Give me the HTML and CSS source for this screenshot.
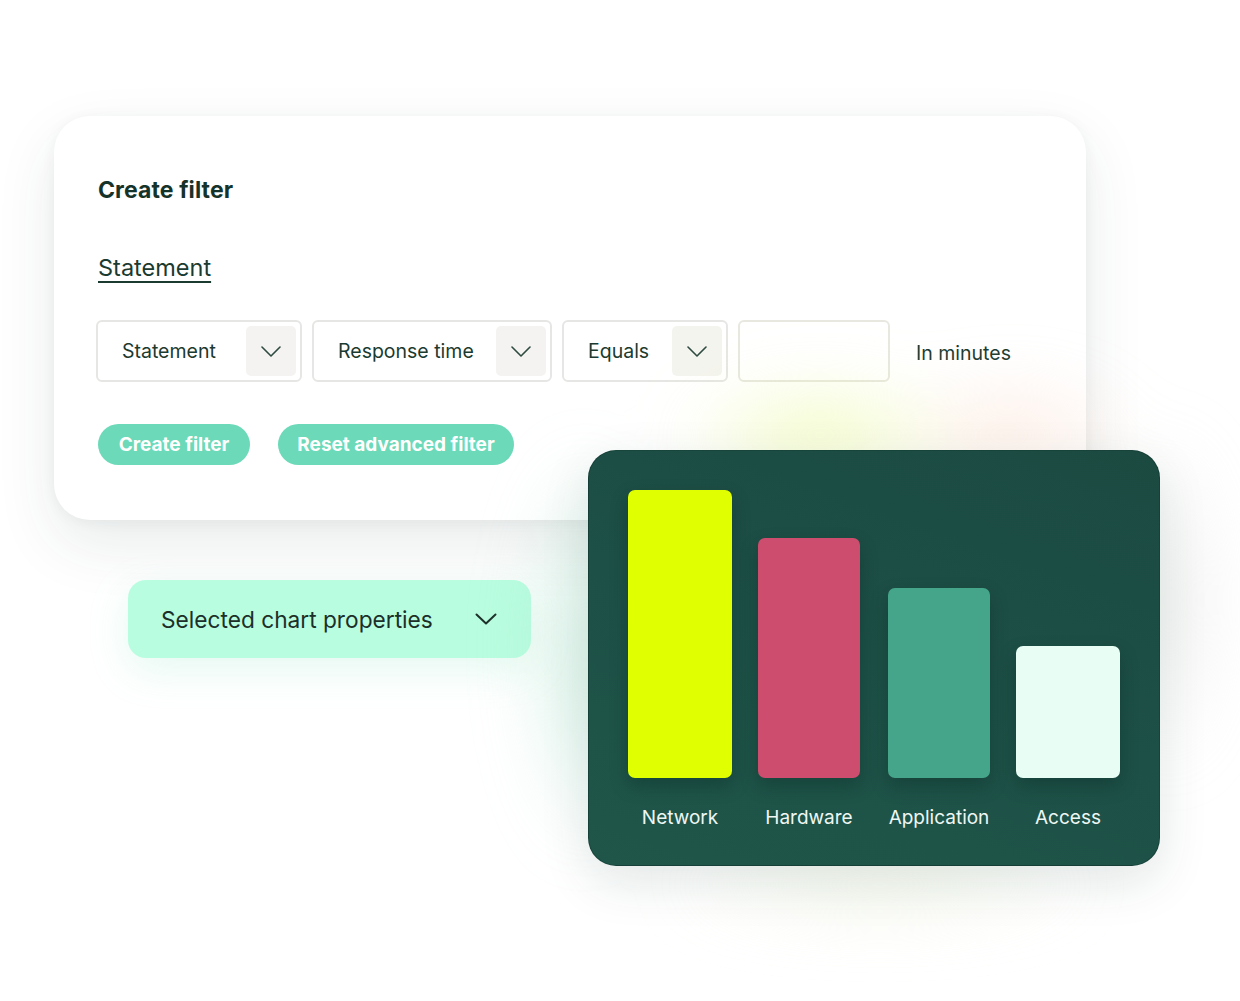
FILE: index.html
```html
<!DOCTYPE html>
<html lang="en">
<head>
<meta charset="utf-8">
<title>Create filter</title>
<link rel="stylesheet" href="styles.css">
</head>
<body>
<main class="stage">
  <section class="filter-card">
    <h2 class="filter-title">Create filter</h2>
    <a class="filter-link" href="#">Statement</a>
    <div class="filter-row">
      <div class="select select-statement">
        <span class="select-label">Statement</span>
        <span class="select-toggle">
          <svg width="20" height="11" viewBox="0 0 20 11" aria-hidden="true"><path d="M1 1l9 9 9-9" fill="none" stroke="#2e4a41" stroke-width="1.6" stroke-linecap="round" stroke-linejoin="round"/></svg>
        </span>
      </div>
      <div class="select select-metric">
        <span class="select-label">Response time</span>
        <span class="select-toggle">
          <svg width="20" height="11" viewBox="0 0 20 11" aria-hidden="true"><path d="M1 1l9 9 9-9" fill="none" stroke="#2e4a41" stroke-width="1.6" stroke-linecap="round" stroke-linejoin="round"/></svg>
        </span>
      </div>
      <div class="select select-operator">
        <span class="select-label">Equals</span>
        <span class="select-toggle">
          <svg width="20" height="11" viewBox="0 0 20 11" aria-hidden="true"><path d="M1 1l9 9 9-9" fill="none" stroke="#2e4a41" stroke-width="1.6" stroke-linecap="round" stroke-linejoin="round"/></svg>
        </span>
      </div>
      <div class="value-input"></div>
      <span class="unit">In minutes</span>
    </div>
    <div class="actions">
      <button class="pill">Create filter</button>
      <button class="pill pill-wide">Reset advanced filter</button>
    </div>
  </section>

  <div class="props">
    <span>Selected chart properties</span>
    <svg width="22" height="12" viewBox="0 0 22 12" aria-hidden="true"><path d="M1.5 1.5l9.5 9 9.5-9" fill="none" stroke="#1c2f29" stroke-width="2" stroke-linecap="round" stroke-linejoin="round"/></svg>
  </div>

  <div class="chart-glow" aria-hidden="true"></div>

  <section class="chart-card">
    <div class="bars">
      <div class="bar-col"><div class="bar bar-network" style="height:288px"></div></div>
      <div class="bar-col"><div class="bar bar-hardware" style="height:240px"></div></div>
      <div class="bar-col"><div class="bar bar-application" style="height:190px"></div></div>
      <div class="bar-col"><div class="bar bar-access" style="height:132px"></div></div>
    </div>
    <div class="labels">
      <span>Network</span>
      <span>Hardware</span>
      <span>Application</span>
      <span>Access</span>
    </div>
  </section>
</main>
</body>
</html>
```

FILE: styles.css
```css
* { box-sizing: border-box; }

html, body {
  margin: 0;
  background: #ffffff;
}

body {
  font-family: Inter, "Open Sans", sans-serif;
  color: #1b3a30;
  width: 1240px;
  height: 1001px;
  overflow: hidden;
}

.stage {
  position: relative;
  padding: 116px 0 0 54px;
  height: 1001px;
}

/* ---------- filter card ---------- */
.filter-card {
  width: 1032px;
  height: 404px;
  background: #ffffff;
  border-radius: 36px;
  padding: 60px 44px 0 44px;
  box-shadow: 0 24px 60px rgba(40, 60, 55, 0.10), 0 2px 14px rgba(40, 60, 55, 0.05);
}

.filter-title {
  margin: 0;
  font-size: 23px;
  line-height: 28px;
  font-weight: 700;
  color: #16332a;
  letter-spacing: 0.1px;
}

.filter-link {
  display: inline-block;
  margin-top: 50px;
  font-size: 23.5px;
  line-height: 28px;
  color: #1b3a30;
  text-decoration: underline;
  text-decoration-thickness: 1.5px;
  text-underline-offset: 5px;
}

.filter-row {
  display: flex;
  align-items: center;
  gap: 10px;
  margin-top: 38px;
  margin-left: -2px;
}

.select {
  height: 62px;
  border: 2px solid #e6e6e4;
  border-radius: 6px;
  display: flex;
  align-items: center;
  justify-content: space-between;
  padding: 0 4px 0 24px;
  background: #fff;
}

.select-statement { width: 206px; }
.select-metric { width: 240px; }
.select-operator { width: 166px; background: transparent; }

.select-label {
  font-size: 19.5px;
  color: #1b3a30;
}

.select-toggle {
  width: 50px;
  height: 50px;
  border-radius: 5px;
  background: #f4f3f1;
  display: flex;
  align-items: center;
  justify-content: center;
}

.select-operator .select-toggle { background: rgba(236, 236, 228, 0.6); }

.value-input {
  width: 152px;
  height: 62px;
  border: 2px solid #e8e8e0;
  border-radius: 6px;
}

.unit {
  margin-left: 16px;
  margin-top: 4px;
  font-size: 19.5px;
  color: #1b3a30;
}

.actions {
  display: flex;
  gap: 28px;
  margin-top: 42px;
}

.pill {
  height: 41px;
  border: 0;
  border-radius: 21px;
  background: #6cd9b9;
  color: #ffffff;
  font-family: inherit;
  font-size: 19px;
  font-weight: 700;
  padding: 0;
  width: 152px;
}

.pill-wide { width: 236px; }

/* ---------- chart properties dropdown ---------- */
.props {
  margin: 60px 0 0 74px;
  width: 403px;
  height: 78px;
  border-radius: 18px;
  background: #b9fde0;
  display: flex;
  align-items: center;
  justify-content: space-between;
  padding: 0 34px 0 33px;
  font-size: 22.7px;
  color: #1c2f29;
  box-shadow: 0 12px 40px rgba(110, 220, 180, 0.18);
}

/* ---------- soft glow behind the chart ---------- */
.chart-glow {
  position: absolute;
  left: 500px;
  top: 340px;
  width: 720px;
  height: 620px;
  filter: blur(30px);
  background:
    radial-gradient(ellipse 200px 80px at 320px 95px, rgba(232, 248, 150, 0.6), transparent 75%),
    radial-gradient(ellipse 170px 80px at 510px 95px, rgba(250, 215, 195, 0.5), transparent 75%),
    radial-gradient(ellipse 90px 280px at 85px 310px, rgba(165, 225, 200, 0.5), transparent 75%),
    radial-gradient(ellipse 80px 240px at 670px 260px, rgba(215, 220, 215, 0.45), transparent 75%),
    radial-gradient(ellipse 290px 55px at 380px 545px, rgba(232, 240, 212, 0.55), transparent 75%);
}

/* ---------- chart card ---------- */
.chart-card {
  position: absolute;
  left: 588px;
  top: 450px;
  width: 572px;
  height: 416px;
  border-radius: 28px;
  background: linear-gradient(200deg, #1b4a41 0%, #1d5047 50%, #1f5649 100%);
  border: 1px solid rgba(12, 40, 34, 0.35);
  padding: 39px 39px 0 39px;
  box-shadow: 0 16px 50px rgba(20, 60, 50, 0.12);
}

.bars {
  display: flex;
  gap: 26px;
  height: 288px;
  align-items: flex-end;
}

.bar-col {
  display: flex;
  align-items: flex-end;
  height: 100%;
  width: 102px;
}

.bar-col:nth-child(1),
.bar-col:nth-child(4) { width: 104px; }
.bar-col:nth-child(3) { margin-left: 2px; }

.bar {
  width: 100%;
  border-radius: 7px;
  box-shadow: 0 8px 18px rgba(5, 30, 25, 0.28);
}

.bar-network { background: #e0ff00; }
.bar-hardware { background: #cd4d6e; }
.bar-application { background: #45a58a; }
.bar-access { background: #e8fdf4; }

.labels {
  display: flex;
  gap: 26px;
  margin-top: 28px;
  font-size: 19px;
  color: #eef7f3;
  line-height: 24px;
}

.labels span {
  width: 102px;
  text-align: center;
  white-space: nowrap;
  display: flex;
  justify-content: center;
}

.labels span:nth-child(1),
.labels span:nth-child(4) { width: 104px; }
.labels span:nth-child(3) { margin-left: 2px; }
```
